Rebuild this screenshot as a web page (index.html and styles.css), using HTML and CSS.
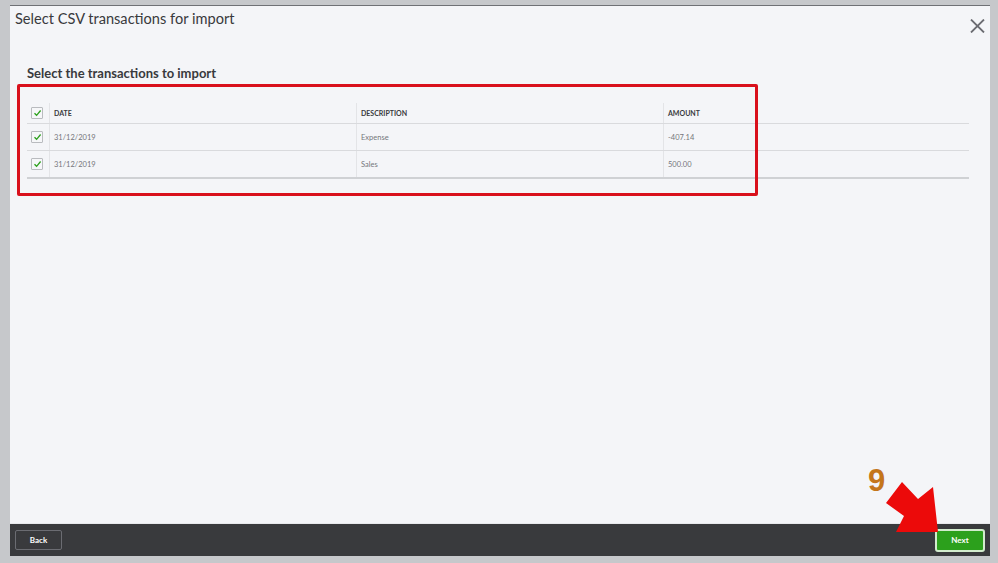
FILE: index.html
```html
<!DOCTYPE html>
<html>
<head>
<meta charset="utf-8">
<link rel="stylesheet" href="styles.css">
</head>
<body>
<div class="dialog">
  <div class="dialog-header">
    <h1 class="title">Select CSV transactions for import</h1>
    <button class="close" aria-label="Close">
      <svg width="15" height="14" viewBox="0 0 15 14"><path d="M1 0.5 L14 13.5 M14 0.5 L1 13.5" stroke="#6b6c72" stroke-width="1.8" fill="none"/></svg>
    </button>
  </div>
  <div class="dialog-body">
    <h2 class="subtitle">Select the transactions to import</h2>
    <table class="txn">
      <thead>
        <tr>
          <th class="c-check"><span class="cb"><svg width="9" height="8" viewBox="0 0 9 8"><path d="M1.5 4.2 L3.6 6.3 L7.6 1.5" stroke="#2ca01c" stroke-width="1.3" fill="none"/></svg></span></th>
          <th>DATE</th>
          <th>DESCRIPTION</th>
          <th>AMOUNT</th>
        </tr>
      </thead>
      <tbody>
        <tr>
          <td class="c-check"><span class="cb"><svg width="9" height="8" viewBox="0 0 9 8"><path d="M1.5 4.2 L3.6 6.3 L7.6 1.5" stroke="#2ca01c" stroke-width="1.3" fill="none"/></svg></span></td>
          <td>31/12/2019</td>
          <td>Expense</td>
          <td>-407.14</td>
        </tr>
        <tr>
          <td class="c-check"><span class="cb"><svg width="9" height="8" viewBox="0 0 9 8"><path d="M1.5 4.2 L3.6 6.3 L7.6 1.5" stroke="#2ca01c" stroke-width="1.3" fill="none"/></svg></span></td>
          <td>31/12/2019</td>
          <td>Sales</td>
          <td>500.00</td>
        </tr>
      </tbody>
    </table>
  </div>
  <div class="dialog-footer">
    <button class="btn-back">Back</button>
    <button class="btn-next">Next</button>
  </div>
</div>
<div class="annot-box"></div>
<div class="annot-num">9</div>
<svg class="annot-arrow" width="998" height="563" viewBox="0 0 998 563">
  <polygon points="886,503 902,482 918,499 933,487 938,532 896,532 904,516" fill="#ec0a0a"/>
</svg>
</body>
</html>
```

FILE: styles.css
```css
html, body {
  margin: 0;
  padding: 0;
}
body {
  width: 998px;
  height: 563px;
  background: #c6c8cb;
  font-family: "Lato", "Open Sans", "Liberation Sans", sans-serif;
  position: relative;
  overflow: hidden;
}
.dialog {
  margin: 5px 8px 0 10px;
  height: 551px;
  box-sizing: border-box;
  border-top: 1px solid #6f7175;
  background: #f4f5f8;
  display: flex;
  flex-direction: column;
}
.dialog-header {
  display: flex;
  justify-content: space-between;
  align-items: flex-start;
  padding: 3px 5px 0 5px;
}
.title {
  margin: 0;
  font-size: 14.6px;
  font-weight: 400;
  line-height: 20px;
  color: #393a3d;
}
.close {
  border: 0;
  background: transparent;
  padding: 0;
  margin-top: 10px;
  width: 15px;
  height: 14px;
  display: block;
}
.close svg { display: block; }
.dialog-body {
  flex: 1;
  padding: 0 21px 0 17px;
}
.subtitle {
  margin: 32px 0 0 0;
  font-size: 13px;
  font-weight: 700;
  line-height: 16px;
  color: #393a3d;
}
.txn {
  margin-top: 22px;
  width: 942px;
  border-collapse: collapse;
  table-layout: fixed;
  font-size: 7.5px;
}
.txn th, .txn td {
  text-align: left;
  padding: 0 0 0 4px;
  border-left: 1px solid #e3e4e7;
}
.txn th {
  height: 20px;
  font-weight: 700;
  color: #393a3d;
  border-bottom: 1px solid #d9dadd;
  font-size: 7px;
}
.txn td {
  height: 26px;
  color: #74757b;
  border-bottom: 1px solid #d9dadd;
}
.txn tbody tr:last-child td {
  border-bottom: 2px solid #cfd1d4;
}
.txn .c-check {
  width: 22px;
  padding: 0;
  border-left: 0;
  border-right: 1px solid #e3e4e7;
}
.txn th:nth-child(2), .txn td:nth-child(2) { width: 302px; border-left: 0; }
.txn th:nth-child(3), .txn td:nth-child(3) { width: 302px; }
.cb {
  display: flex;
  align-items: center;
  justify-content: center;
  width: 10px;
  height: 10px;
  margin-left: 4px;
  border: 1px solid #b9bbbf;
  background: #f6f7f9;
  border-radius: 1px;
}
.cb svg { display: block; }
.dialog-footer {
  height: 32px;
  background: #393a3d;
  border-top: 1px solid #e8e9ec;
  display: flex;
  align-items: center;
  justify-content: space-between;
  padding: 0 5px 0 5px;
}
.btn-back {
  width: 47px;
  height: 20px;
  background: transparent;
  border: 1px solid #6b6c72;
  color: #ffffff;
  font-family: "Lato", "Liberation Sans", sans-serif;
  font-size: 8px;
  font-weight: 700;
  border-radius: 2px;
  padding: 0;
}
.btn-next {
  width: 50px;
  height: 23px;
  background: #2ca01c;
  border: 2px solid #d2ebcd;
  color: #ffffff;
  font-family: "Lato", "Liberation Sans", sans-serif;
  font-size: 8px;
  font-weight: 700;
  border-radius: 3px;
  padding: 0;
}
.annot-box {
  position: absolute;
  left: 17px;
  top: 84px;
  width: 741px;
  height: 112px;
  box-sizing: border-box;
  border: 3px solid #d9101c;
  border-radius: 2px;
}
.annot-num {
  position: absolute;
  left: 868px;
  top: 463px;
  font-family: "Liberation Sans", sans-serif;
  font-weight: 700;
  font-size: 31px;
  line-height: 36px;
  color: #c4761b;
}
.annot-arrow {
  position: absolute;
  left: 0;
  top: 0;
  pointer-events: none;
}
```
